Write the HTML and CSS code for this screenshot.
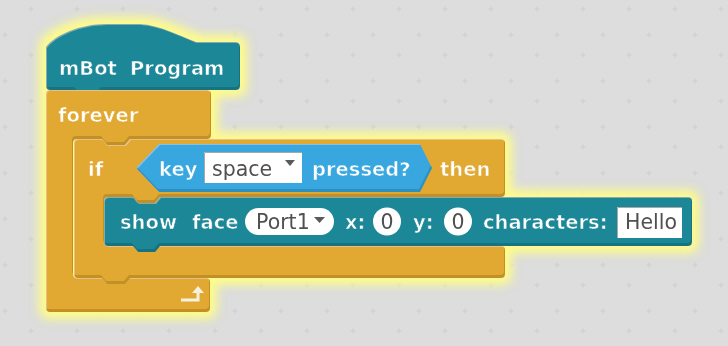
FILE: index.html
```html
<!DOCTYPE html>
<html>
<head>
<meta charset="utf-8">
<link rel="stylesheet" href="styles.css">
</head>
<body>
<div class="canvas">
<svg class="stage" width="728" height="346" viewBox="0 0 728 346" xmlns="http://www.w3.org/2000/svg">
  <defs>
    <pattern id="grid" patternUnits="userSpaceOnUse" width="46" height="46">
      <rect x="28.5" y="8" width="5" height="2" class="plus"/>
      <rect x="30" y="6.5" width="2" height="5" class="plus"/>
      <rect x="2.5" y="34" width="5" height="2" class="plus"/>
      <rect x="4" y="32.5" width="2" height="5" class="plus"/>
    </pattern>
    <filter id="glow" x="-20%" y="-30%" width="140%" height="160%">
      <feMorphology in="SourceAlpha" operator="dilate" radius="4" result="d"/>
      <feGaussianBlur in="d" stdDeviation="6" result="b"/>
      <feFlood flood-color="#fdfb8c"/>
      <feComposite in2="b" operator="in" result="g"/>
      <feMerge><feMergeNode in="g"/><feMergeNode in="g"/><feMergeNode in="SourceGraphic"/></feMerge>
    </filter>
    <filter id="bevel" x="-5%" y="-5%" width="110%" height="110%">
      <feOffset in="SourceAlpha" dx="-1" dy="-3" result="o1"/>
      <feComposite in="SourceAlpha" in2="o1" operator="out" result="e1"/>
      <feFlood flood-color="#000" flood-opacity="0.28"/>
      <feComposite in2="e1" operator="in" result="dark"/>
      <feOffset in="SourceAlpha" dx="1" dy="1" result="o2"/>
      <feComposite in="SourceAlpha" in2="o2" operator="out" result="e2"/>
      <feFlood flood-color="#fff" flood-opacity="0.22"/>
      <feComposite in2="e2" operator="in" result="light"/>
      <feMerge><feMergeNode in="SourceGraphic"/><feMergeNode in="dark"/><feMergeNode in="light"/></feMerge>
    </filter>
  </defs>
  <rect width="728" height="346" fill="url(#grid)"/>

  <g class="script" filter="url(#glow)">
    <path class="teal" filter="url(#bevel)" d="M46,47 C55,35 80,24 106,24 L140,24 C160,25 180,36 196,42 L235,42 Q240,42 240,47 L240,86 Q240,90 236,90 L102,90 L97,96 L80,96 L75,90 L50,90 Q46,90 46,86 Z"/>
    <path class="orange" filter="url(#bevel)" d="M50,90 L206,90 Q211,90 211,94 L211,135 Q211,139 207,139 L130,139 L125,145 L107,145 L102,139 L77,139 Q73,139 73,143 L73,274 Q73,278 77,278 L206,278 Q210,278 210,282 L210,308 Q210,312 206,312 L50,312 Q46,312 46,308 L46,94 Q46,90 50,90 Z"/>
    <path class="orange" filter="url(#bevel)" d="M78,139 L102,139 L107,145 L125,145 L130,139 L500,139 Q505,139 505,143 L505,193 Q505,197 501,197 L160,197 L155,203 L138,203 L133,197 L108,197 Q104,197 104,201 L104,242 Q104,246 108,246 L501,246 Q505,246 505,250 L505,274 Q505,278 501,278 L130,278 L125,284 L107,284 L102,278 L78,278 Q74,278 74,274 L74,143 Q74,139 78,139 Z"/>
    <path class="blue" filter="url(#bevel)" d="M136,168 L159,144 L420,144 L432,168 L420,192 L159,192 Z"/>
    <path class="teal" filter="url(#bevel)" d="M108,197 L133,197 L138,203 L155,203 L160,197 L688,197 Q692,197 692,201 L692,242 Q692,246 688,246 L160,246 L155,252 L138,252 L133,246 L108,246 Q104,246 104,242 L104,201 Q104,197 108,197 Z"/>
  </g>

  <text class="lbl on-teal" x="59" y="75">mBot</text>
  <text class="lbl on-teal" x="130" y="75">Program</text>
  <text class="lbl on-orange" x="58" y="122">forever</text>
  <text class="lbl on-orange" x="88" y="176">if</text>
  <text class="lbl on-blue" x="159" y="176">key</text>
  <rect class="field" x="204" y="152" width="98" height="31"/>
  <path class="field-shade" d="M204.5,183 L204.5,152.5 L302,152.5"/>
  <text class="inp" x="212" y="176">space</text>
  <path class="arrow" d="M285,160 L295,160 L290,166 Z"/>
  <text class="lbl on-blue" x="312" y="176">pressed?</text>
  <text class="lbl on-orange" x="440" y="176">then</text>

  <text class="lbl on-teal" x="120" y="229">show</text>
  <text class="lbl on-teal" x="192" y="229">face</text>
  <rect class="field" x="245" y="208" width="89" height="27" rx="13.5"/>
  <text class="inp" x="256" y="229">Port1</text>
  <path class="arrow" d="M314,217 L325,217 L319.5,223 Z"/>
  <text class="lbl on-teal" x="345" y="229">x:</text>
  <circle class="field" cx="387" cy="221.5" r="14"/>
  <text class="inp mid" x="387" y="229">0</text>
  <text class="lbl on-teal" x="413" y="229">y:</text>
  <circle class="field" cx="458" cy="221.5" r="14"/>
  <text class="inp mid" x="458" y="229">0</text>
  <text class="lbl on-teal" x="483" y="229">characters:</text>
  <rect class="field" x="617" y="207" width="65" height="31"/>
  <path class="field-shade" d="M617.5,238 L617.5,207.5 L682,207.5"/>
  <text class="inp" x="625" y="229">Hello</text>

  <path class="loop" d="M181,300 L198,300 L198,292"/>
  <path class="loophead" d="M192,293 L204,293 L198,286 Z"/>
</svg>
</div>
</body>
</html>
```
FILE: styles.css
```css
html, body {
  margin: 0;
  padding: 0;
}
body {
  background: #dcdddc;
  width: 728px;
  height: 346px;
  overflow: hidden;
  font-family: "DejaVu Sans", "Liberation Sans", sans-serif;
}
.canvas {
  width: 728px;
  height: 346px;
}
.stage {
  display: block;
}
.plus {
  fill: #d3d4d3;
}
.teal {
  fill: #1b8797;
}
.orange {
  fill: #e1a832;
}
.blue {
  fill: #38a7df;
}
.lbl {
  fill: #ffffff;
  font-size: 19.5px;
  font-weight: bold;
  stroke-width: 0.6px;
}
.on-teal {
  stroke: #1b8797;
}
.on-orange {
  stroke: #e1a832;
}
.on-blue {
  stroke: #38a7df;
}
.inp {
  fill: #505050;
  font-size: 20.5px;
}
.mid {
  text-anchor: middle;
}
.field {
  fill: #ffffff;
}
.field-shade {
  fill: none;
  stroke: #a8a8a8;
  stroke-width: 1;
}
.arrow {
  fill: #5a5a5a;
}
.loop {
  fill: none;
  stroke: #f7f2e0;
  stroke-width: 3;
}
.loophead {
  fill: #f7f2e0;
}
```
